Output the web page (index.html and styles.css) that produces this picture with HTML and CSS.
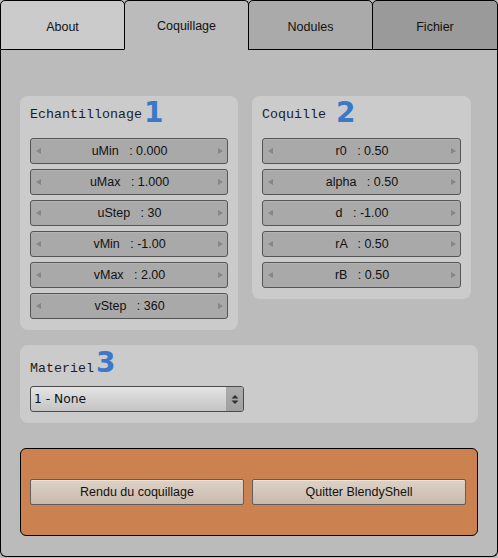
FILE: index.html
```html
<!DOCTYPE html>
<html>
<head>
<meta charset="utf-8">
<link rel="stylesheet" href="styles.css">
</head>
<body>
<div class="window">
  <div class="tabs">
    <div class="tab tab-about">About</div>
    <div class="tab tab-active">Coquillage</div>
    <div class="tab tab-nodules">Nodules</div>
    <div class="tab tab-fichier">Fichier</div>
  </div>
  <div class="content">
    <div class="row">
      <section class="panel panel-echant">
        <div class="title"><span class="title-text">Echantillonage</span><span class="num">1</span></div>
        <div class="fields">
          <div class="field"><span class="arr arr-l"></span><span class="val">uMin   : 0.000</span><span class="arr arr-r"></span></div>
          <div class="field"><span class="arr arr-l"></span><span class="val">uMax   : 1.000</span><span class="arr arr-r"></span></div>
          <div class="field"><span class="arr arr-l"></span><span class="val">uStep   : 30</span><span class="arr arr-r"></span></div>
          <div class="field"><span class="arr arr-l"></span><span class="val">vMin   : -1.00</span><span class="arr arr-r"></span></div>
          <div class="field"><span class="arr arr-l"></span><span class="val">vMax   : 2.00</span><span class="arr arr-r"></span></div>
          <div class="field"><span class="arr arr-l"></span><span class="val">vStep   : 360</span><span class="arr arr-r"></span></div>
        </div>
      </section>
      <section class="panel panel-coq">
        <div class="title"><span class="title-text">Coquille </span><span class="num">2</span></div>
        <div class="fields">
          <div class="field"><span class="arr arr-l"></span><span class="val">r0   : 0.50</span><span class="arr arr-r"></span></div>
          <div class="field"><span class="arr arr-l"></span><span class="val">alpha   : 0.50</span><span class="arr arr-r"></span></div>
          <div class="field"><span class="arr arr-l"></span><span class="val">d   : -1.00</span><span class="arr arr-r"></span></div>
          <div class="field"><span class="arr arr-l"></span><span class="val">rA   : 0.50</span><span class="arr arr-r"></span></div>
          <div class="field"><span class="arr arr-l"></span><span class="val">rB   : 0.50</span><span class="arr arr-r"></span></div>
        </div>
      </section>
    </div>
    <section class="panel panel-mat">
      <div class="title title-mat"><span class="title-text">Materiel</span><span class="num">3</span></div>
      <div class="select">
        <span class="select-text">1 - None</span>
        <span class="select-btn">
          <svg width="8" height="11" viewBox="0 0 8 11"><path d="M4 1 L7.5 4.5 L0.5 4.5 Z" fill="#2e2e2e"/><path d="M0.5 6.5 L7.5 6.5 L4 10 Z" fill="#2e2e2e"/></svg>
        </span>
      </div>
    </section>
    <section class="render">
      <div class="btn">Rendu du coquillage</div>
      <div class="btn">Quitter BlendyShell</div>
    </section>
  </div>
</div>
</body>
</html>
```

FILE: styles.css
```css
html, body {
  margin: 0;
  padding: 0;
}
body {
  width: 498px;
  height: 558px;
  overflow: hidden;
  background: #bbbbbb;
  font-family: "Liberation Sans", Arial, sans-serif;
  color: #111;
}
.window {
  width: 498px;
  height: 557px;
  display: flex;
  flex-direction: column;
}
.tabs {
  display: flex;
  height: 50px;
  flex: none;
}
.tab {
  box-sizing: border-box;
  width: 125px;
  height: 50px;
  margin-left: -1px;
  border: 1px solid #000;
  border-radius: 5px 5px 0 0;
  display: flex;
  justify-content: center;
  padding-top: 19px;
  font-size: 12.5px;
  line-height: 14px;
  color: #111;
}
.tab-about {
  margin-left: 0;
  background: #cbcbcb;
}
.tab-active {
  background: #bbbbbb;
  border-bottom-color: #bbbbbb;
  padding-top: 18px;
}
.tab-nodules {
  background: #aaaaaa;
}
.tab-fichier {
  flex: 1;
  background: #9a9a9a;
}
.content {
  flex: 1;
  box-sizing: border-box;
  border: 1px solid #000;
  border-top: none;
  border-radius: 0 0 6px 6px;
  padding: 46px 18px 0 19px;
  background: #bbbbbb;
}
.row {
  display: flex;
  align-items: flex-start;
  gap: 14px;
}
.panel {
  box-sizing: border-box;
  background: #cbcbcb;
  border-radius: 8px;
  padding: 3px 10px 11px;
}
.panel-echant {
  width: 218px;
}
.panel-coq {
  width: 219px;
}
.title {
  display: flex;
  align-items: center;
  height: 28px;
  margin-bottom: 11px;
}
.title-text {
  font-family: "Liberation Mono", "DejaVu Sans Mono", monospace;
  font-size: 13.33px;
  line-height: 16px;
  white-space: pre;
  color: #1e1e1e;
  margin-top: 3px;
}
.num {
  margin-left: 2px;
  font-family: "DejaVu Sans", sans-serif;
  font-weight: bold;
  font-size: 28px;
  line-height: 28px;
  color: #3b78c8;
}
.fields {
  display: flex;
  flex-direction: column;
  gap: 5px;
}
.field {
  box-sizing: border-box;
  height: 26px;
  display: flex;
  align-items: center;
  border: 1px solid #555;
  border-radius: 3px;
  background: #a9a9a9;
  box-shadow: inset 0 1px 0 #b4b4b4;
}
.val {
  flex: 1;
  text-align: center;
  white-space: pre;
  font-size: 12.5px;
  line-height: 14px;
  color: #111;
}
.arr {
  width: 0;
  height: 0;
  border-top: 3.5px solid transparent;
  border-bottom: 3.5px solid transparent;
}
.arr-l {
  margin-left: 5px;
  border-right: 5px solid #868686;
}
.arr-r {
  margin-right: 4px;
  border-left: 5px solid #868686;
}
.panel-mat {
  width: 458px;
  margin-top: 15px;
  padding-top: 4px;
}
.title-mat {
  align-items: baseline;
  margin-bottom: 9px;
}
.title-mat .title-text {
  margin-top: 0;
}
.select {
  box-sizing: border-box;
  width: 214px;
  height: 26px;
  display: flex;
  align-items: stretch;
  border: 1px solid #4a4a4a;
  border-radius: 3px;
  background: linear-gradient(#e4e4e4, #c4c4c4);
  overflow: hidden;
}
.select-text {
  flex: 1;
  display: flex;
  align-items: center;
  padding-left: 3px;
  font-family: "DejaVu Sans", sans-serif;
  font-size: 12.3px;
  color: #111;
}
.select-btn {
  width: 17px;
  display: flex;
  align-items: center;
  justify-content: center;
  background: linear-gradient(#acacac, #a0a0a0);
}
.render {
  box-sizing: border-box;
  width: 458px;
  height: 88px;
  margin-top: 25px;
  border: 1px solid #000;
  border-radius: 6px;
  background: #cc8151;
  display: flex;
  align-items: center;
  gap: 8px;
  padding-left: 9px;
}
.btn {
  box-sizing: border-box;
  width: 214px;
  height: 26px;
  display: flex;
  align-items: center;
  justify-content: center;
  border: 1px solid #5e5e5e;
  border-radius: 2px;
  background: linear-gradient(#ded2c6, #c7baad);
  box-shadow: inset 0 1px 0 #ece3da;
  font-size: 12.5px;
  color: #111;
}
```
